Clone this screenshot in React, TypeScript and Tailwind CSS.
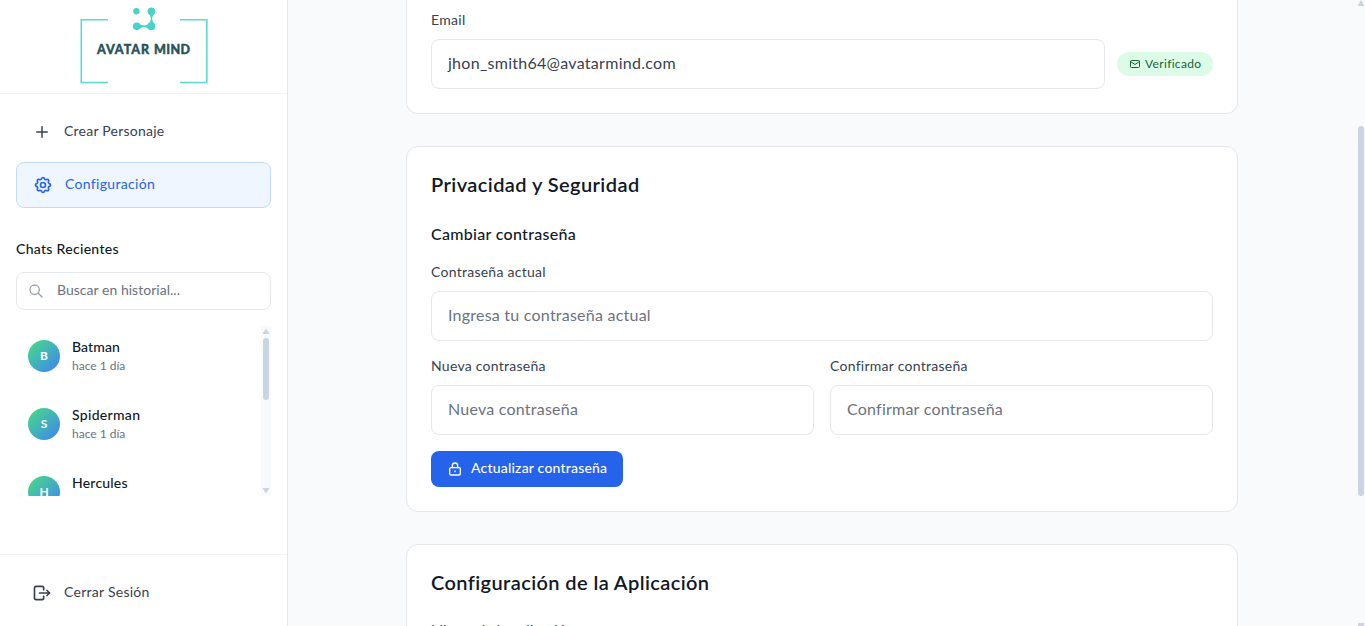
import { TbLogout, TbMail, TbPlus, TbSearch, TbSettings } from "react-icons/tb";

const chats = [
  { name: "Batman", when: "hace 1 día", spacing: "tracking-[0.1px]" },
  { name: "Spiderman", when: "hace 1 día", spacing: "tracking-[0.3px]" },
  { name: "Hercules", when: "hace 1 día", spacing: "tracking-[0.2px]" },
];

function Logo() {
  return (
    <svg width="288" height="93" viewBox="0 0 288 93" fill="none">
      <path d="M108 19.8H81.3V82.5H108M180 19.8H206.8V82.5H180" stroke="#5bdacd" strokeWidth="1.6" />
      <g fill="#46d3cb">
        <circle cx="136.4" cy="11.3" r="3.2" />
        <circle cx="151.4" cy="11.3" r="3.8" />
        <circle cx="136.7" cy="26.3" r="3.8" />
        <circle cx="151.3" cy="26.2" r="3.9" />
        <path d="M147.8 12.6Q150.9 16.2 150.9 18.8Q150.9 21.6 148 24.6H154.8Q152.1 21.6 152.1 18.8Q152.1 16.2 155 12.6Z" />
        <path d="M138.4 22.9Q141.2 25.6 144 25.6Q147 25.6 149.6 22.9V29.7Q147 26.9 144 26.9Q141.2 26.9 138.4 29.7Z" />
      </g>
      <g fill="#27545a" stroke="#27545a" strokeWidth="0.4" fontFamily="Lato, sans-serif" fontWeight="900" fontSize="12.5">
        <text x="97" y="54" textLength="52" lengthAdjust="spacing">AVATAR</text>
        <text x="154" y="54" textLength="36" lengthAdjust="spacing">MIND</text>
      </g>
    </svg>
  );
}

function LockIcon() {
  return (
    <svg className="shrink-0" width="16" height="16" viewBox="0 0 24 24" fill="none" stroke="currentColor" strokeWidth="2" strokeLinecap="round" strokeLinejoin="round">
      <rect x="4" y="10" width="16" height="11" rx="2" />
      <path d="M8 10V7a4 4 0 0 1 8 0v3M12 15v1" />
    </svg>
  );
}

function Field({ label, placeholder }: { label: string; placeholder: string }) {
  return (
    <div className="min-w-0 flex-1">
      <label className="block h-5 text-sm leading-[18px] tracking-[0.26px] text-[#374151]">{label}</label>
      <div className="mt-2 flex h-[50px] items-center rounded-lg border border-[#e5e7eb] bg-white px-4 pb-0.5 text-base tracking-[0.23px] text-[#6b7280]">{placeholder}</div>
    </div>
  );
}

function Sidebar() {
  return (
    <aside className="flex w-72 shrink-0 flex-col border-r border-[#e5e7eb] bg-white">
      <div className="h-[94px] shrink-0 overflow-hidden border-b border-[#f3f4f6]"><Logo /></div>
      <nav className="flex flex-col gap-2 p-4 text-sm">
        <div className="flex h-11 items-center gap-3 px-4 text-[#374151]">
          <TbPlus size={18} className="mx-px" /><span className="pb-0.5 tracking-[0.24px]">Crear Personaje</span>
        </div>
        <div className="flex h-[46px] items-center gap-3 rounded-lg border border-[#bfdbfe] bg-[#eff6ff] px-4 text-[#2563eb]">
          <TbSettings size={20} /><span className="pb-0.5 tracking-[0.32px]">Configuración</span>
        </div>
      </nav>
      <section className="flex flex-1 flex-col px-4 pt-[15px]">
        <h2 className="h-5 text-sm font-medium tracking-[0.3px] text-[#111827]">Chats Recientes</h2>
        <div className="mt-[13px] flex h-[38px] items-center gap-[13px] rounded-lg border border-[#e5e7eb] px-[11px] text-sm text-[#6b7280]">
          <TbSearch size={16} className="text-[#9ca3af]" /><span className="pb-0.5 tracking-[0.03px]">Buscar en historial...</span>
        </div>
        <div className="mt-4 flex h-[170px] overflow-hidden">
          <div className="flex flex-1 flex-col gap-2">
            {chats.map((chat) => (
              <div key={chat.name} className="flex h-[60px] shrink-0 items-center gap-3 px-3">
                <div className="flex size-8 items-center justify-center rounded-full bg-[linear-gradient(135deg,#4ade80,#3b82f6)] text-xs font-bold text-white">{chat.name[0]}</div>
                <div>
                  <p className={`h-5 text-sm leading-[18px] font-medium text-[#111827] ${chat.spacing}`}>{chat.name}</p>
                  <p className="text-xs text-[#6b7280]">{chat.when}</p>
                </div>
              </div>
            ))}
          </div>
          <div className="flex w-[10px] flex-col items-center bg-[#f8fafc]">
            <svg width="6" height="12"><path d="M0 7L3 2.5L6 7V8H0Z" fill="#cbd5e1" /></svg>
            <div className="h-[62px] w-1.5 rounded-full bg-[#cbd5e1]" />
            <svg className="mt-auto" width="6" height="10"><path d="M0 3V2H6V3L3 7.5Z" fill="#cbd5e1" /></svg>
          </div>
        </div>
      </section>
      <footer className="h-[72px] shrink-0 border-t border-[#f3f4f6] px-4 pt-4">
        <div className="flex h-11 items-center gap-3 px-4 text-sm text-[#374151]">
          <TbLogout size={20} /><span className="pb-0.5 tracking-[0.27px]">Cerrar Sesión</span>
        </div>
      </footer>
    </aside>
  );
}

export default function App() {
  return (
    <div className="flex h-[626px] w-[1365px] overflow-hidden bg-[#f8fafc] font-['Lato',sans-serif]">
      <Sidebar />
      <main className="flex min-w-0 flex-1 flex-col gap-8 overflow-hidden pl-[118px]">
        <section className="h-[114px] w-[832px] shrink-0 rounded-b-xl border border-t-0 border-[#e5e7eb] bg-white px-6 pt-[11px]">
          <label className="block h-5 text-sm leading-[18px] tracking-[0.3px] text-[#374151]">Email</label>
          <div className="mt-2 flex items-center gap-3">
            <div className="flex h-[50px] flex-1 items-center rounded-lg border border-[#e5e7eb] px-4 pb-0.5 text-base tracking-[0.28px] text-[#374151]">jhon_smith64@avatarmind.com</div>
            <div className="flex h-6 w-24 items-center gap-1 rounded-full bg-[#dcfce7] px-3 text-xs text-[#166534]">
              <TbMail size={12} className="shrink-0" /><span className="tracking-[0.33px]">Verificado</span>
            </div>
          </div>
        </section>
        <section className="h-[366px] w-[832px] shrink-0 rounded-xl border border-[#e5e7eb] bg-white p-6">
          <h2 className="h-7 text-xl leading-[26px] font-semibold tracking-[0.42px] text-[#111827]">Privacidad y Seguridad</h2>
          <h3 className="mt-6 h-6 text-base leading-[22px] font-medium tracking-[0.3px] text-[#111827]">Cambiar contraseña</h3>
          <div className="mt-4 flex flex-col gap-4">
            <Field label="Contraseña actual" placeholder="Ingresa tu contraseña actual" />
            <div className="flex gap-4">
              <Field label="Nueva contraseña" placeholder="Nueva contraseña" />
              <Field label="Confirmar contraseña" placeholder="Confirmar contraseña" />
            </div>
            <button className="flex h-9 w-48 items-center gap-2 rounded-lg bg-[#2563eb] px-4 text-sm font-medium text-white">
              <LockIcon /><span className="pb-0.5 whitespace-nowrap tracking-[0.2px]">Actualizar contraseña</span>
            </button>
          </div>
        </section>
        <section className="h-[260px] w-[832px] shrink-0 rounded-xl border border-[#e5e7eb] bg-white p-6">
          <h2 className="h-7 text-xl leading-[26px] font-semibold tracking-[0.4px] text-[#111827]">Configuración de la Aplicación</h2>
          <label className="mt-6 block text-sm leading-[18px] tracking-[0.2px] text-[#374151]">Idioma de la aplicación</label>
        </section>
      </main>
      <div className="flex w-[10px] shrink-0 flex-col items-center pr-px pl-[3px]">
        <svg className="shrink-0" width="6" height="6"><path d="M0 5L3 0L6 5V6H0Z" fill="#cbd5e1" /></svg>
        <div className="mt-[120px] h-[370px] w-1.5 rounded-full bg-[#cbd5e1]" />
        <div className="mt-auto h-[3px] w-1.5 bg-[#cbd5e1]" />
      </div>
    </div>
  );
}
